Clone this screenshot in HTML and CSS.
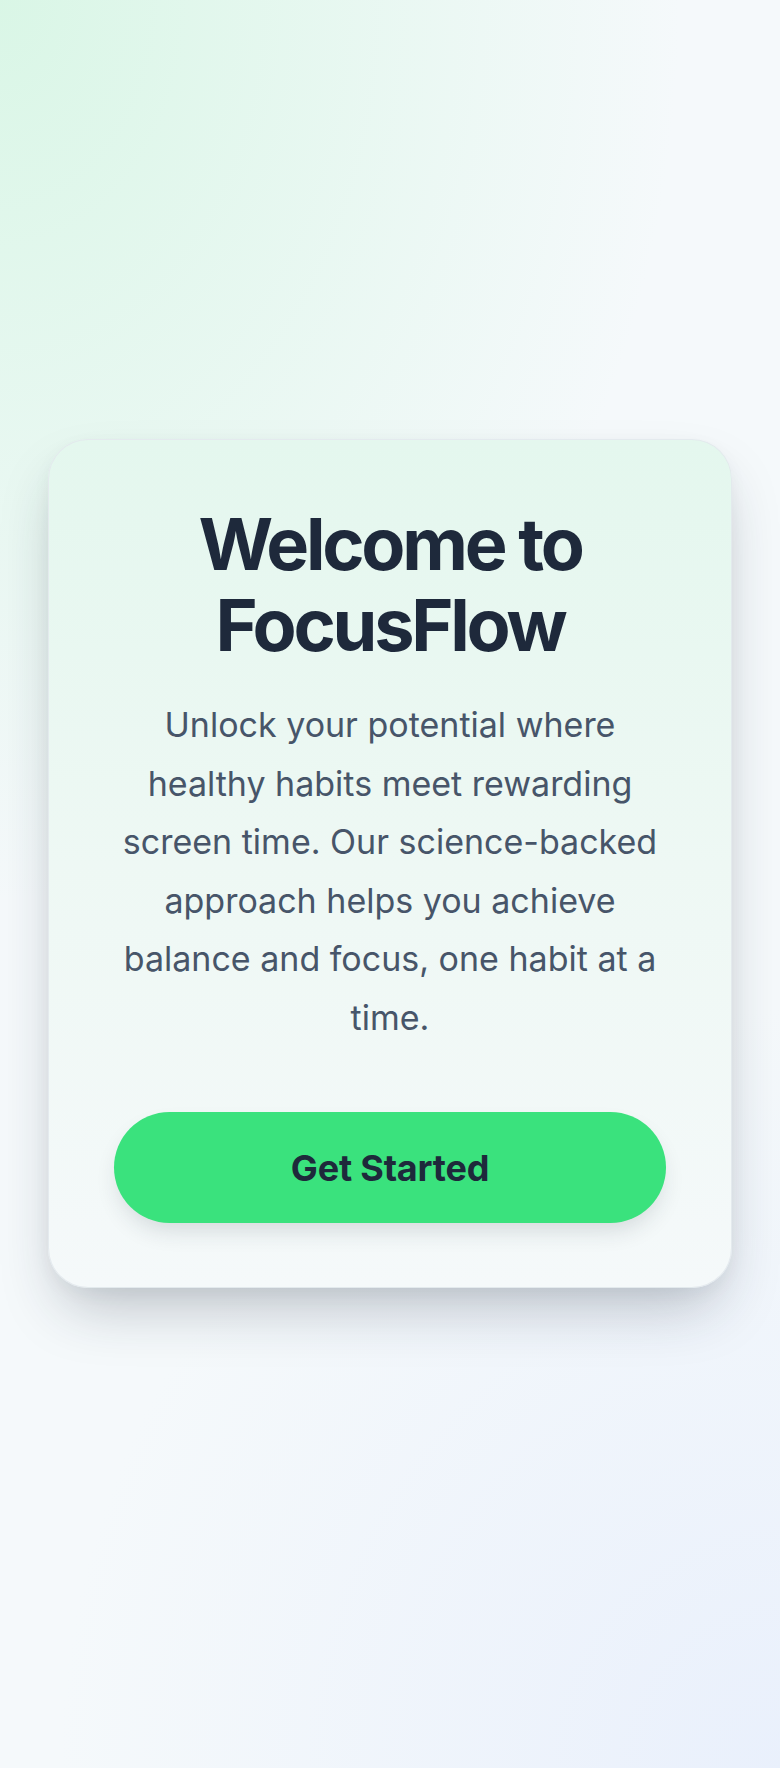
FILE: index.html
```html
<!DOCTYPE html>
<html lang="en">
<head>
<meta charset="utf-8">
<title>FocusFlow</title>
<link rel="stylesheet" href="styles.css">
</head>
<body>
<main class="page">
  <section class="card">
    <h1 class="title">Welcome to FocusFlow</h1>
    <p class="lead">Unlock your potential where healthy habits meet rewarding screen time. Our science-backed approach helps you achieve balance and focus, one habit at a time.</p>
    <button class="cta" type="button">Get Started</button>
  </section>
</main>
</body>
</html>
```
FILE: styles.css
```css
* { box-sizing: border-box; }
html, body { margin: 0; padding: 0; }
body {
  font-family: Inter, "Noto Sans", sans-serif;
  background-color: #f5f9fb;
  background-image:
    radial-gradient(ellipse 680px 900px at 0% 0%, rgba(216, 246, 229, 0.95) 0%, rgba(216, 246, 229, 0) 100%),
    radial-gradient(ellipse 720px 760px at 100% 100%, rgba(232, 239, 252, 0.9) 0%, rgba(232, 239, 252, 0) 100%);
  min-height: 1768px;
}
.page {
  min-height: 1768px;
  display: flex;
  align-items: flex-start;
  justify-content: center;
  padding: 439px 48px 0;
}
.card {
  width: 684px;
  border-radius: 40px;
  border: 1px solid rgba(226, 232, 236, 0.9);
  background: linear-gradient(180deg, #e4f7ee 0%, #eef8f4 50%, #f5f9fa 100%);
  box-shadow: 0 30px 60px -14px rgba(30, 41, 59, 0.28), 0 6px 18px rgba(30, 41, 59, 0.04);
  padding: 63px 65px 64px;
  display: flex;
  flex-direction: column;
  align-items: stretch;
  text-align: center;
}
.title {
  margin: 0;
  font-size: 72px;
  line-height: 81px;
  font-weight: 700;
  letter-spacing: -0.045em;
  color: #1e293b;
}
.lead {
  margin: 31px 0 0;
  font-size: 34px;
  line-height: 58.5px;
  font-weight: 400;
  letter-spacing: 0;
  color: #475569;
}
.cta {
  margin-top: 65px;
  height: 111px;
  border: none;
  border-radius: 999px;
  background: #3ae27d;
  color: #1e293b;
  font-family: Inter, "Noto Sans", sans-serif;
  font-size: 36px;
  font-weight: 700;
  letter-spacing: -0.005em;
  box-shadow: 0 12px 24px -6px rgba(30, 41, 59, 0.16);
  cursor: pointer;
}
```
